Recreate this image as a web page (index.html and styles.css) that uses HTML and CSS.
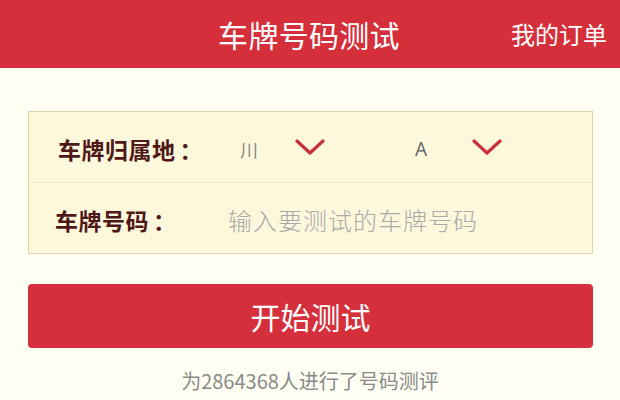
FILE: index.html
```html
<!DOCTYPE html>
<html lang="zh-CN">
<head>
<meta charset="utf-8">
<title>车牌号码测试</title>
<link rel="stylesheet" href="styles.css">
</head>
<body>
<header class="topbar">
  <h1 class="topbar-title">车牌号码测试</h1>
  <a class="topbar-link" href="#">我的订单</a>
</header>
<main class="content">
  <section class="form-card">
    <div class="form-row row-region">
      <span class="form-label">车牌归属地<span class="colon">：</span></span>
      <div class="select select-province">
        <span class="select-value">川</span>
        <svg class="chevron" width="30" height="16" viewBox="0 0 30 16"><polyline points="2,2 15,14 28,2" fill="none" stroke="#c9303b" stroke-width="3.2" stroke-linecap="round" stroke-linejoin="round"/></svg>
      </div>
      <div class="select select-letter">
        <span class="select-value latin">A</span>
        <svg class="chevron" width="30" height="16" viewBox="0 0 30 16"><polyline points="2,2 15,14 28,2" fill="none" stroke="#c9303b" stroke-width="3.2" stroke-linecap="round" stroke-linejoin="round"/></svg>
      </div>
    </div>
    <div class="form-row row-number">
      <span class="form-label">车牌号码<span class="colon">：</span></span>
      <input class="plate-input" type="text" placeholder="输入要测试的车牌号码">
    </div>
  </section>
  <button class="start-btn" type="button">开始测试</button>
  <p class="stats">为2864368人进行了号码测评</p>
</main>
</body>
</html>
```
FILE: styles.css
```css
* { box-sizing: border-box; }
html, body { margin: 0; padding: 0; }
body {
  background: #fffef3;
  font-family: "Noto Sans CJK SC", "Noto Sans", sans-serif;
  width: 620px;
  height: 400px;
  overflow: hidden;
}
.topbar {
  height: 68px;
  background: #d52f3b;
  display: flex;
  align-items: center;
  justify-content: center;
  position: relative;
}
.topbar-title {
  margin: 0;
  font-size: 30px;
  font-weight: 400;
  line-height: 1;
  color: #fff;
  margin-left: -2px;
  letter-spacing: 0.3px;
}
.topbar-link {
  position: absolute;
  right: 13px;
  top: 22px;
  font-size: 24px;
  line-height: 24px;
  color: #fff;
  text-decoration: none;
}
.content {
  padding: 43px 27px 0 28px;
  display: flex;
  flex-direction: column;
}
.form-card {
  background: #fdf8dc;
  border: 1px solid #ddd5b2;
  display: flex;
  flex-direction: column;
}
.form-row {
  height: 70px;
  display: flex;
  align-items: center;
  padding-top: 4px;
}
.row-region {
  padding-left: 29px;
  border-bottom: 1px solid #eee6c6;
  height: 71px;
}
.row-number {
  padding-left: 26px;
}
.form-label {
  font-size: 23px;
  font-weight: 700;
  color: #4f1818;
  line-height: 1;
  width: 182px;
  flex: none;
  letter-spacing: 0.5px;
}
.colon { margin-left: 4px; }
.row-number .form-label { width: 173px; }
.select {
  display: flex;
  align-items: center;
}
.select-letter { margin-left: 90px; }
.select-value {
  font-size: 18px;
  color: #8a8a8a;
  line-height: 1;
  width: 55px;
}
.select-value.latin {
  font-family: "Noto Sans", sans-serif;
  font-size: 19px;
  color: #6a6a6a;
  width: 57px;
}
.chevron { display: block; margin-top: -4px; }
.plate-input {
  border: none;
  background: transparent;
  outline: none;
  padding: 0;
  margin: 0;
  font-family: "Noto Sans CJK SC", sans-serif;
  font-size: 24px;
  line-height: 1.2;
  width: 340px;
  color: #555;
  letter-spacing: 1px;
}
.plate-input::placeholder {
  color: #a9a9a9;
  font-weight: 300;
}
.start-btn {
  margin-top: 30px;
  height: 64px;
  background: #d52f3b;
  border: none;
  border-radius: 4px;
  color: #fff;
  font-family: "Noto Sans CJK SC", sans-serif;
  font-size: 30px;
  line-height: 1;
  padding: 0;
}
.stats {
  margin: 23px 0 0 -1px;
  text-align: center;
  font-size: 20px;
  line-height: 20px;
  color: #8a8a8a;
}
```
